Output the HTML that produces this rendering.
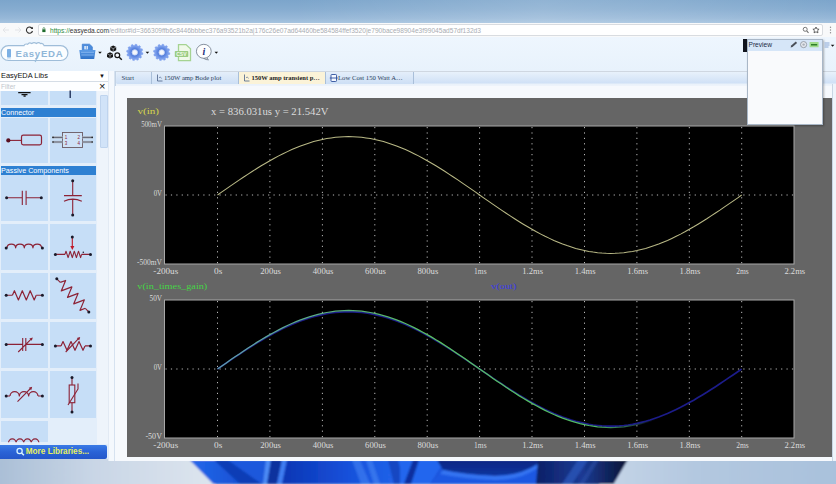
<!DOCTYPE html>
<html><head><meta charset="utf-8"><title>EasyEDA</title>
<style>
html,body{margin:0;padding:0}
body{width:836px;height:484px;overflow:hidden;position:relative;background:#c3d3e5;font-family:"Liberation Sans",sans-serif}
.abs{position:absolute}
#title{left:0;top:0;width:836px;height:22.5px;background:linear-gradient(90deg,rgba(255,255,255,0) 0%,rgba(255,255,255,0) 35%,rgba(255,255,255,0.16) 65%,rgba(255,255,255,0.1) 80%,rgba(255,255,255,0) 100%),linear-gradient(180deg,#7ca5cb 0%,#86acd0 40%,#97b8d8 80%,#a6c4df 100%)}
#addr{left:0;top:22.5px;width:836px;height:15px;background:#f8f9fa}
#url{left:37.5px;top:24.2px;width:785px;height:12.2px;background:#fff;border:1px solid #d9dce0;border-radius:2px;box-sizing:border-box}
#urltxt{left:50px;top:25.5px;font-size:6.6px;line-height:9px;white-space:nowrap;color:#a9adb3;letter-spacing:0px}
#toolbar{left:0;top:37px;width:836px;height:34px;background:linear-gradient(180deg,#eef6fe,#e8f2fc)}
#tabs{left:116px;top:71px;width:720px;height:15.5px;background:linear-gradient(180deg,#e8f1fb 0%,#d0e1f6 78%,#cddff5 80%,#e9f1fa 84%,#eef4fb 100%);border-top:1px solid #cfd7e1;border-bottom:1px solid #cdd6e0;box-sizing:border-box}
.tab{position:absolute;top:72px;height:11.7px;font-family:"Liberation Serif",serif;font-size:6.7px;line-height:12px;color:#2b3f5c;white-space:nowrap;border-right:1px solid #a9bfd9;box-sizing:border-box;background:linear-gradient(180deg,#e4eefa,#cddff5)}
#work{left:114px;top:86px;width:722px;height:374.5px;background:#f6f9fd}
#panel{left:127px;top:98px;width:705px;height:358.8px;background:#656565}
#left{left:0;top:71px;width:108px;height:388px;background:#e3eefa}
.cell{position:absolute;background:#c6def7}
.hdr{position:absolute;left:1px;width:95px;height:9px;background:#2e80d2;color:#fff;font-size:7.2px;line-height:9px;white-space:nowrap;overflow:hidden}
svg{position:absolute;left:0;top:0}
.g{stroke:#b8b8b8;stroke-width:1;stroke-dasharray:1.2 4.2}
.ax{font-family:"Liberation Serif","Noto Serif CJK SC",serif;font-size:8.6px;fill:#dcdcdc}
</style></head><body>
<!-- wallpaper -->
<svg width="836" height="484" viewBox="0 0 836 484">
<defs>
<linearGradient id="wl" x1="0" x2="1"><stop offset="0" stop-color="#a9bed6"/><stop offset="0.45" stop-color="#c9d6e6"/><stop offset="1" stop-color="#dde5ee"/></linearGradient>
<linearGradient id="wr" x1="0" x2="1"><stop offset="0" stop-color="#c6d5e7"/><stop offset="0.4" stop-color="#b3c8e0"/><stop offset="1" stop-color="#a9c1dc"/></linearGradient>
<linearGradient id="b1" x1="0" x2="1"><stop offset="0" stop-color="#2368ea"/><stop offset="1" stop-color="#1348cc"/></linearGradient>
<linearGradient id="b2" x1="0" x2="1"><stop offset="0" stop-color="#0c36b4"/><stop offset="0.55" stop-color="#1650da"/><stop offset="1" stop-color="#2264ea"/></linearGradient>
<linearGradient id="b3" x1="0" x2="0" y1="0" y2="1"><stop offset="0" stop-color="#0a2684"/><stop offset="1" stop-color="#10349e"/></linearGradient>
<linearGradient id="b4" x1="0" x2="1"><stop offset="0" stop-color="#0b1f66"/><stop offset="0.5" stop-color="#1b3a94"/><stop offset="1" stop-color="#081434"/></linearGradient>
</defs>
<filter id="wb" x="0" y="0" width="1" height="1"><feGaussianBlur stdDeviation="0.9"/></filter>
<g filter="url(#wb)">
<rect x="-5" y="450" width="220" height="40" fill="url(#wl)"/>
<rect x="600" y="450" width="241" height="40" fill="url(#wr)"/>
<path d="M190,460 H627.5 L613.5,484 H213.5 Z" fill="#1a55dc"/>
<path d="M190,460 H228 L262,484 H213.5 Z" fill="url(#b1)"/>
<path d="M214,460 H228 L262,484 H240 Z" fill="#0e3db6"/>
<path d="M228,460 H268 L264,484 H262 Z" fill="#1b58dc"/>
<path d="M266,460 h5 l-4,24 h-4z" fill="#4d8cf6"/>
<path d="M271,460 h11 l-5,24 h-10z" fill="#0d319e"/>
<path d="M282,460 h5 l-5,24 h-5z" fill="#3f7ef2"/>
<path d="M287,460 H400 V484 H282 Z" fill="url(#b2)"/>
<path d="M352,460 h8 l10,24 h-9z" fill="#3f7cf0" opacity="0.7"/>
<path d="M366,460 h6 l8,24 h-6z" fill="#4685f4" opacity="0.6"/>
<path d="M388,460 h10 l6,24 h-10z" fill="#0f3ab0" opacity="0.7"/>
<path d="M400,460 H445 L430,484 H400 Z" fill="#2466ee"/>
<path d="M413,460 h6 l-8,24 h-7z" fill="#0b2e9e"/>
<path d="M437,460 H540 L538,464 Q520,476 495,476 Q465,475 443,470 Z" fill="url(#b3)"/>
<path d="M443,470 Q465,475 495,476 Q520,476 538,464 L540,484 H430 Z" fill="#1c58e2"/>
<path d="M443,470 Q465,475 495,476 Q520,476 538,464 L538,468 Q520,480 495,480 Q465,479 440,474 Z" fill="#3574f2"/>
<path d="M538,460 H627.5 L613.5,484 H536 Z" fill="url(#b4)"/>
<path d="M578,460 h10 l-16,24 h-10z" fill="#2c56b8" opacity="0.8"/>
<path d="M594,460 h5 l-15,24 h-5z" fill="#2a4ea8" opacity="0.6"/>
</g>
</svg>

<div id="title" class="abs"></div>
<div id="addr" class="abs"></div>
<div id="url" class="abs"></div>
<div id="urltxt" class="abs"><span style="color:#2a8a3c">https://</span><span style="color:#333">easyeda.com</span>/editor#id=366309ffb6c8446bbbec376a93521b2a|176c26e07ad64460be584584ffef3520|e790bace98904e3f99045ad57df132d3</div>
<div id="toolbar" class="abs"></div>
<div id="tabs" class="abs"></div>
<div id="work" class="abs"></div>
<div id="panel" class="abs"></div>

<div class="tab" style="left:117px;width:35px;padding-left:4.5px">Start</div>
<div class="tab" style="left:152px;width:87px;padding-left:12px">150W amp Bode plot</div>
<div class="tab" style="left:239px;width:87px;padding-left:12.5px;background:#fbf3d8;font-weight:bold;font-size:6.5px;color:#222">150W amp transient p…</div>
<div class="tab" style="left:326px;width:88px;padding-left:12px">Low Cost 150 Watt A…</div>

<!-- left library panel -->
<div id="left" class="abs"></div>
<div class="abs" style="left:0;top:71px;width:108px;height:10px;background:#fff;font-size:7.4px;line-height:10px;color:#111;padding-left:1px;box-sizing:border-box">EasyEDA Libs</div>
<div class="abs" style="left:0;top:81px;width:108px;height:10px;background:#fdfeff;border-top:1px solid #d5dde6;font-size:6.5px;line-height:9px;color:#c2c6cc;padding-left:1px;box-sizing:border-box">Filter</div>
<div class="abs" style="left:99px;top:72px;font-size:6px;line-height:8px;color:#111">&#9660;</div>
<div class="abs" style="left:99px;top:81px;font-size:11px;line-height:11px;color:#111">&#215;</div>

<div class="cell" style="left:1px;top:91px;width:46.5px;height:13.5px"></div>
<div class="cell" style="left:49.5px;top:91px;width:46.5px;height:13.5px"></div>
<div class="hdr" style="top:108px">Connector</div>
<div class="cell" style="left:1px;top:117.5px;width:46.5px;height:45px"></div>
<div class="cell" style="left:49.5px;top:117.5px;width:46.5px;height:45px"></div>
<div class="hdr" style="top:166px">Passive Components</div>
<div class="cell" style="left:1px;top:175px;width:46.5px;height:46px"></div>
<div class="cell" style="left:49.5px;top:175px;width:46.5px;height:46px"></div>
<div class="cell" style="left:1px;top:223.5px;width:46.5px;height:46.5px"></div>
<div class="cell" style="left:49.5px;top:223.5px;width:46.5px;height:46.5px"></div>
<div class="cell" style="left:1px;top:272.5px;width:46.5px;height:46px"></div>
<div class="cell" style="left:49.5px;top:272.5px;width:46.5px;height:46px"></div>
<div class="cell" style="left:1px;top:321.5px;width:46.5px;height:46.5px"></div>
<div class="cell" style="left:49.5px;top:321.5px;width:46.5px;height:46.5px"></div>
<div class="cell" style="left:1px;top:370.5px;width:46.5px;height:47px"></div>
<div class="cell" style="left:49.5px;top:370.5px;width:46.5px;height:47px"></div>
<div class="cell" style="left:1px;top:420.5px;width:46.5px;height:21.5px"></div>
<!-- scrollbar -->
<div class="abs" style="left:97px;top:91px;width:11px;height:353px;background:#eef4fb"></div>
<div class="abs" style="left:100.3px;top:94.5px;width:7.5px;height:53px;background:#d1e3f8;border:1px solid #bfd4ee;box-sizing:border-box;border-radius:1px"></div>
<!-- splitter -->
<div class="abs" style="left:108px;top:71px;width:6.5px;height:389.5px;background:#f4f8fd;border-left:1px solid #e2eaf4;border-right:1px solid #d6e2f0;box-sizing:border-box"></div>
<!-- more libraries -->
<div class="abs" style="left:0;top:444.5px;width:107px;height:14.5px;background:linear-gradient(180deg,#3a7be6,#2a62d6 50%,#2457ca);border-radius:0 2px 2px 0;color:#e8f060;font-weight:bold;font-size:8.2px;line-height:13.5px;padding-left:25.8px;box-sizing:border-box;white-space:nowrap">More Libraries...</div>

<!-- preview -->
<div class="abs" style="left:747px;top:38.5px;width:76px;height:86px;background:#f9fafc;border:1px solid #a9b7c7;box-sizing:border-box;box-shadow:0.5px 0.5px 2px rgba(0,0,0,.3)"></div>
<div class="abs" style="left:748px;top:39.5px;width:74px;height:11px;background:#d6e6f8"></div>
<div class="abs" style="left:743px;top:39px;width:4px;height:12.5px;background:#10131c"></div>
<div class="abs" style="left:748.5px;top:40px;font-size:6.6px;line-height:9px;color:#1b2a44">Preview</div>
<!-- right edge -->
<div class="abs" style="left:832px;top:84px;width:4px;height:377px;background:#eef4fb;border-left:1px solid #c9d6e4;box-sizing:border-box"></div>

<svg width="836" height="484" viewBox="0 0 836 484">
<defs><radialGradient id="gg" cx="0.5" cy="0.5" r="0.5"><stop offset="0" stop-color="#4a72d4"/><stop offset="0.6" stop-color="#5882de"/><stop offset="1" stop-color="#7c9fec"/></radialGradient><linearGradient id="fg" x1="0" y1="0" x2="0" y2="1"><stop offset="0" stop-color="#5b9be6"/><stop offset="1" stop-color="#2f72c8"/></linearGradient></defs>
<g stroke="#e2e4e7" stroke-width="1" fill="none"><path d="M3,30 h6 M5.5,27.5 L3,30 L5.5,32.5"/><path d="M15,30 h6 M18.5,27.5 L21,30 L18.5,32.5"/></g>
<path d="M32.2,28.6 A3.1,3.1 0 1 0 32.5,31" stroke="#333" stroke-width="1.1" fill="none"/><path d="M30.8,28.9 h2.2 v-2.2 z" fill="#333"/>
<rect x="42.3" y="29.3" width="3.2" height="2.8" fill="#1d6b2c"/><path d="M43,29.3 v-0.8 a0.9,0.9 0 0 1 1.8,0 v0.8" stroke="#1d6b2c" stroke-width="0.6" fill="none"/>
<circle cx="805.2" cy="29.3" r="2" stroke="#6a6a6a" stroke-width="0.9" fill="none"/><path d="M806.7,30.9 l1.8,1.9" stroke="#6a6a6a" stroke-width="1.1"/>
<path d="M816,27 l0.95,2 2.15,0.25 -1.55,1.45 0.4,2.15 -1.95,-1.05 -1.95,1.05 0.4,-2.15 -1.55,-1.45 2.15,-0.25z" stroke="#444" stroke-width="0.8" fill="none"/>
<g fill="#8a8a8a"><circle cx="830.5" cy="27.3" r="0.7"/><circle cx="830.5" cy="30" r="0.7"/><circle cx="830.5" cy="32.7" r="0.7"/></g>
<path d="M8.5,45.6 H24 q1,-2.3 3.6,-1.3 q1.6,-2.3 4.2,-0.7 q2,-2 4.6,-0.2 q2.2,-1.6 4.3,0.2 q2.3,-0.8 3.4,2 H60.5 a7.45,7.45 0 0 1 0,14.9 H8.5 a7.45,7.45 0 0 1 0,-14.9z" fill="#fbfdff" stroke="#9fbdd9" stroke-width="1.2"/><path d="M37.3,56.5 L35.2,62" stroke="#9dc0de" stroke-width="1.3"/>
<rect x="7" y="49" width="4" height="8.5" rx="0.8" fill="#7db0e4"/><path d="M8,57.5 v2 M10,57.5 v2" stroke="#9dc0e6" stroke-width="0.7"/>
<text x="15.5" y="56.6" style="font-family:'Liberation Sans',sans-serif;font-weight:bold;font-size:9.6px;letter-spacing:0.75px" fill="#8fb6d8">EasyEDA</text>
<path d="M82.3,44.2 h7.2 l2.8,2.6 v4 h-10z" fill="#4c8cdc" stroke="#3f7fd2" stroke-width="0.8"/><path d="M84.3,46 h3.6 v3.4 h-3.6z" fill="#e4eefb"/><path d="M86.3,46 v3.4" stroke="#4c8cdc" stroke-width="0.7"/>
<path d="M79.3,50 h16.2 l-1.3,9 h-13.6z" fill="url(#fg)"/><path d="M81,52.3 h13 M81.3,55 h12.4" stroke="#8fbdf2" stroke-width="0.8"/>
<path d="M98.2,51.7 h3.6 l-1.8,2z" fill="#111"/>
<path d="M145.6,51.7 h3.6 l-1.8,2z" fill="#111"/>
<path d="M214.5,51.7 h3.6 l-1.8,2z" fill="#111"/>
<path d="M830.8000000000001,44.7 h3.6 l-1.8,2z" fill="#111"/>
<g fill="#151515"><path d="M113.2,45.6 l3,1.5 v3.2 l-3,1.5 -3,-1.5 v-3.2z"/><path d="M110,52.2 l3,1.5 v3.2 l-3,1.5 -3,-1.5 v-3.2z"/></g>
<g stroke="#e8eef6" stroke-width="0.5" fill="none"><path d="M110.2,47.1 l3,1.5 3,-1.5 M113.2,48.6 v3.2"/><path d="M107,53.7 l3,1.5 3,-1.5 M110,55.2 v3.2"/></g>
<circle cx="117.3" cy="55.2" r="2.4" stroke="#151515" stroke-width="1.2" fill="#f4f8fd"/><path d="M119.2,57.2 l2.6,2.5" stroke="#151515" stroke-width="1.5"/>
<path d="M141.80,52.40 L142.98,52.91 L142.72,54.52 L141.43,54.63 L140.86,55.90 L141.63,56.94 L140.60,58.20 L139.43,57.65 L138.30,58.46 L138.45,59.74 L136.92,60.32 L136.18,59.26 L134.80,59.40 L134.29,60.58 L132.68,60.32 L132.57,59.03 L131.30,58.46 L130.26,59.23 L129.00,58.20 L129.55,57.03 L128.74,55.90 L127.46,56.05 L126.88,54.52 L127.94,53.78 L127.80,52.40 L126.62,51.89 L126.88,50.28 L128.17,50.17 L128.74,48.90 L127.97,47.86 L129.00,46.60 L130.17,47.15 L131.30,46.34 L131.15,45.06 L132.68,44.48 L133.42,45.54 L134.80,45.40 L135.31,44.22 L136.92,44.48 L137.03,45.77 L138.30,46.34 L139.34,45.57 L140.60,46.60 L140.05,47.77 L140.86,48.90 L142.14,48.75 L142.72,50.28 L141.66,51.02Z" fill="#7c9fec" stroke="#7c9fec" stroke-width="0.5" stroke-linejoin="round"/>
<circle cx="134.8" cy="52.4" r="6.4" fill="url(#gg)"/>
<circle cx="134.8" cy="52.4" r="2.7" fill="#f4f7fc" stroke="#c4d4f6" stroke-width="0.9"/>
<path d="M168.70,52.40 L169.88,52.91 L169.62,54.52 L168.33,54.63 L167.76,55.90 L168.53,56.94 L167.50,58.20 L166.33,57.65 L165.20,58.46 L165.35,59.74 L163.82,60.32 L163.08,59.26 L161.70,59.40 L161.19,60.58 L159.58,60.32 L159.47,59.03 L158.20,58.46 L157.16,59.23 L155.90,58.20 L156.45,57.03 L155.64,55.90 L154.36,56.05 L153.78,54.52 L154.84,53.78 L154.70,52.40 L153.52,51.89 L153.78,50.28 L155.07,50.17 L155.64,48.90 L154.87,47.86 L155.90,46.60 L157.07,47.15 L158.20,46.34 L158.05,45.06 L159.58,44.48 L160.32,45.54 L161.70,45.40 L162.21,44.22 L163.82,44.48 L163.93,45.77 L165.20,46.34 L166.24,45.57 L167.50,46.60 L166.95,47.77 L167.76,48.90 L169.04,48.75 L169.62,50.28 L168.56,51.02Z" fill="#7c9fec" stroke="#7c9fec" stroke-width="0.5" stroke-linejoin="round"/>
<circle cx="161.7" cy="52.4" r="6.4" fill="url(#gg)"/>
<circle cx="161.7" cy="52.4" r="2.7" fill="#f4f7fc" stroke="#c4d4f6" stroke-width="0.9"/>
<path d="M178.5,44.6 h7.5 l4.5,4.2 v11.8 h-12z" fill="#f0f9ea" stroke="#a5d392" stroke-width="1.3"/>
<rect x="174.8" y="51" width="13.5" height="6" rx="0.8" fill="#9ccc84"/>
<text x="176.2" y="56" style="font-family:'Liberation Sans',sans-serif;font-weight:bold;font-size:5px" fill="#f2fbec">CSV</text>
<path d="M207,57.6 q0.3,1.5 1.5,2.2 q-3,0.2 -5,-1.6z" fill="#fdfeff" stroke="#6a7686" stroke-width="0.8"/><ellipse cx="203.8" cy="51.3" rx="7.4" ry="7.0" fill="#fdfeff" stroke="#6a7686" stroke-width="0.8"/>
<text x="202.6" y="55" style="font-family:'Liberation Serif',serif;font-weight:bold;font-style:italic;font-size:10px" fill="#1c2f7c">i</text>
<path d="M790.6,47.4 l0.6,-1.8 4.6,-4 1.3,1.3 -4.6,4z" fill="#4a4f58"/>
<circle cx="803.6" cy="44.6" r="3.1" fill="#e4e8ee" stroke="#8a929c" stroke-width="0.8"/><circle cx="803.6" cy="44.6" r="1.2" fill="#aab0b8"/>
<rect x="809.6" y="42" width="9" height="5.3" rx="0.6" fill="#9fdc8a"/><rect x="811" y="44" width="6.2" height="1.5" fill="#2e7d2a"/>
<path d="M824.5,43 h5 M824.5,45 h5 M824.5,47 h4" stroke="#7f9fd0" stroke-width="0.9"/>
<path d="M157.5,74.5 v6.5 h5" stroke="#4a5f86" stroke-width="0.8" fill="none"/><path d="M159.0,78 q1.2,-2.5 2.5,0.5" stroke="#4a5f86" stroke-width="0.6" fill="none"/>
<path d="M244.5,74.5 v6.5 h5" stroke="#4a5f86" stroke-width="0.8" fill="none"/><path d="M246.0,78 q1.2,-2.5 2.5,0.5" stroke="#4a5f86" stroke-width="0.6" fill="none"/>
<rect x="331" y="74.5" width="5.5" height="7" rx="0.8" fill="#f4f8ff" stroke="#2c4f9c" stroke-width="0.9"/><path d="M329.8,78 h8" stroke="#2c4f9c" stroke-width="0.9"/>
<circle cx="19.6" cy="451" r="2.6" stroke="#d8f4ff" stroke-width="1.3" fill="none"/><path d="M21.6,453 l2.3,2.3" stroke="#d8f4ff" stroke-width="1.5"/>
<path d="M18.2,92.6 h12.4 M21.5,94.6 h6 M23.5,96.2 h2.2" stroke="#111" stroke-width="1.2"/>
<path d="M70.2,90.5 v7.5" stroke="#16264e" stroke-width="1.3"/>
<path d="M8.3,140.4 H21.5" stroke="#8c2236" stroke-width="1.1"/><rect x="21.5" y="135.2" width="20" height="9.6" rx="1.8" fill="none" stroke="#8c2236" stroke-width="1.2"/><circle cx="8.3" cy="140.4" r="2.1" fill="#5a1020"/>
<rect x="62.5" y="132.5" width="20" height="15" fill="#cfe2f7" stroke="#6a5a62" stroke-width="0.9"/>
<path d="M52.5,137.4 h10 M52.5,142 h10 M82.5,137.4 h10 M82.5,142 h10" stroke="#b8c2cf" stroke-width="2.6"/>
<path d="M52.5,137.4 h10 M52.5,142 h10 M82.5,137.4 h10 M82.5,142 h10" stroke="#3a3a48" stroke-width="0.7"/>
<g fill="#222"><circle cx="53" cy="137.4" r="0.8"/><circle cx="53" cy="142" r="0.8"/><circle cx="92.2" cy="137.4" r="0.8"/><circle cx="92.2" cy="142" r="0.8"/></g>
<text x="64.8" y="139.3" style="font-family:'Liberation Sans',sans-serif;font-size:4.5px" fill="#8c2236">1</text><text x="64.8" y="144.6" style="font-family:'Liberation Sans',sans-serif;font-size:4.5px" fill="#8c2236">3</text><text x="77.6" y="139.3" style="font-family:'Liberation Sans',sans-serif;font-size:4.5px" fill="#8c2236">2</text><text x="77.6" y="144.6" style="font-family:'Liberation Sans',sans-serif;font-size:4.5px" fill="#8c2236">4</text>
<path d="M6.6,197.8 H22.3 M26.1,197.8 H41.3 M22.3,190.7 V205 M26.1,190.7 V205" stroke="#8c2236" stroke-width="1.1" fill="none" stroke-linejoin="round"/>
<g fill="#1a1a2a"><circle cx="6.6" cy="197.8" r="1.5"/><circle cx="41.3" cy="197.8" r="1.5"/></g>
<path d="M72.7,180.7 V195.6 M64,195.6 H81.8 M64,201.2 Q72.7,197 81.8,201.2 M72.7,199.2 V215" stroke="#8c2236" stroke-width="1.1" fill="none" stroke-linejoin="round"/>
<g fill="#1a1a2a"><circle cx="72.7" cy="180.7" r="1.5"/><circle cx="72.7" cy="215" r="1.5"/></g>
<path d="M7.0,247.8 a4.33,3.9 0 0 1 8.65,0 a4.33,3.9 0 0 1 8.65,0 a4.33,3.9 0 0 1 8.65,0 a4.33,3.9 0 0 1 8.65,0" stroke="#8c2236" stroke-width="1.2" fill="none" stroke-linejoin="round"/>
<g fill="#1a1a2a"><circle cx="6.2" cy="248" r="1.5"/><circle cx="42.4" cy="248" r="1.5"/></g>
<path d="M55.4,254.4 H65 M81.6,254.4 H90.5" stroke="#8c2236" stroke-width="1.1" fill="none" stroke-linejoin="round"/>
<path d="M65.0,254.4 L66.0,251.2 L68.1,257.6 L70.2,251.2 L72.3,257.6 L74.3,251.2 L76.4,257.6 L78.5,251.2 L80.6,257.6 L81.6,254.4" stroke="#8c2236" stroke-width="1.1" fill="none" stroke-linejoin="round"/>
<path d="M72.3,237 V247" stroke="#c01828" stroke-width="1.1"/><path d="M70.3,246 h4 l-2,4z" fill="#c01828"/>
<g fill="#1a1a2a"><circle cx="55.4" cy="254.4" r="1.5"/><circle cx="90.5" cy="254.4" r="1.5"/><circle cx="72.3" cy="237" r="1.5"/></g>
<circle cx="83.3" cy="252.2" r="0.8" fill="#1a1a2a"/>
<path d="M6.2,295.3 H12.4 M36.2,295.3 H42.4" stroke="#8c2236" stroke-width="1.1" fill="none" stroke-linejoin="round"/>
<path d="M12.4,295.3 L14.4,290.7 L18.4,299.9 L22.3,290.7 L26.3,299.9 L30.2,290.7 L34.2,299.9 L36.2,295.3" stroke="#8c2236" stroke-width="1.2" fill="none" stroke-linejoin="round"/>
<g fill="#1a1a2a"><circle cx="6.2" cy="295.3" r="1.5"/><circle cx="42.4" cy="295.3" r="1.5"/></g>
<g transform="translate(56.8,278.8) rotate(46.0)"><path d="M0,0 H5 M41.0,0 H46.0" stroke="#8c2236" stroke-width="1.1" fill="none" stroke-linejoin="round"/><path d="M5.0,0.0 L7.3,-5.2 L11.8,5.2 L16.3,-5.2 L20.8,5.2 L25.3,-5.2 L29.8,5.2 L34.3,-5.2 L38.8,5.2 L41.0,0.0" stroke="#8c2236" stroke-width="1.2" fill="none" stroke-linejoin="round"/></g>
<g fill="#1a1a2a"><circle cx="56.8" cy="278.8" r="1.5"/><circle cx="88.8" cy="311.9" r="1.5"/></g>
<path d="M6.2,344.4 H22.7 M25.8,344.4 H42.4 M22.7,338 V351 M25.8,338 V351 M18.2,352 L31.6,338.6" stroke="#8c2236" stroke-width="1.1" fill="none" stroke-linejoin="round"/>
<path d="M32.8,337.4 l-3.4,1 2.4,2.4z" fill="#8c2236"/>
<g fill="#1a1a2a"><circle cx="6.2" cy="344.4" r="1.5"/><circle cx="42.4" cy="344.4" r="1.5"/></g>
<path d="M55.4,345.9 H61 M85,345.9 H90.5" stroke="#8c2236" stroke-width="1.1" fill="none" stroke-linejoin="round"/>
<path d="M61.0,345.9 L63.0,341.5 L67.0,350.3 L71.0,341.5 L75.0,350.3 L79.0,341.5 L83.0,350.3 L85.0,345.9" stroke="#8c2236" stroke-width="1.2" fill="none" stroke-linejoin="round"/>
<path d="M65.7,352 L79,338.2" stroke="#8c2236" stroke-width="1.1" fill="none" stroke-linejoin="round"/>
<path d="M80.2,337 l-3.4,1 2.4,2.4z" fill="#8c2236"/>
<g fill="#1a1a2a"><circle cx="55.4" cy="345.9" r="1.5"/><circle cx="90.5" cy="345.9" r="1.5"/></g>
<path d="M6.2,396 H10 M38,396 H42.4" stroke="#8c2236" stroke-width="1.1" fill="none" stroke-linejoin="round"/>
<path d="M10.0,396.0 a4.67,4.60 0 0 1 9.33,0 a4.67,4.60 0 0 1 9.33,0 a4.67,4.60 0 0 1 9.33,0" stroke="#8c2236" stroke-width="1.2" fill="none" stroke-linejoin="round"/>
<path d="M17.5,401.7 L31,388" stroke="#8c2236" stroke-width="1.1" fill="none" stroke-linejoin="round"/>
<path d="M32.2,386.8 l-3.4,1 2.4,2.4z" fill="#8c2236"/>
<g fill="#1a1a2a"><circle cx="6.2" cy="396" r="1.5"/><circle cx="42.4" cy="396" r="1.5"/></g>
<path d="M72,377.5 V385 M72,402.7 V412 M68,405 L78,389 V383.5" stroke="#8c2236" stroke-width="1.1" fill="none" stroke-linejoin="round"/>
<rect x="69.2" y="385" width="5.6" height="17.7" fill="none" stroke="#8c2236" stroke-width="1.1"/>
<g fill="#1a1a2a"><circle cx="72" cy="377.5" r="1.5"/><circle cx="72" cy="412" r="1.5"/></g>
<svg x="0" y="420" width="48" height="22.3" viewBox="0 420 48 22.3" style="position:static"><path d="M8.5,443 a3.8,4.2 0 0 1 7.6,0 a3.8,4.2 0 0 1 7.6,0 a3.8,4.2 0 0 1 7.6,0 a3.8,4.2 0 0 1 7.6,0" stroke="#8c2236" stroke-width="1.2" fill="none"/></svg>
</svg>
<svg width="836" height="484" viewBox="0 0 836 484">
<defs><linearGradient id="gfade" gradientUnits="userSpaceOnUse" x1="217" y1="0" x2="742" y2="0"><stop offset="0" stop-color="#5fa0a8"/><stop offset="0.3" stop-color="#58b470"/><stop offset="0.45" stop-color="#5cc858"/><stop offset="0.72" stop-color="#4fb866"/><stop offset="0.79" stop-color="#3f8f70" stop-opacity="0.6"/><stop offset="0.84" stop-color="#1c1c8a" stop-opacity="0"/><stop offset="1" stop-color="#1c1c8a" stop-opacity="0"/></linearGradient></defs>
<rect x="164.5" y="126" width="629.5" height="138" fill="#000" stroke="#a8a8a8" stroke-width="1"/>
<line x1="217.5" y1="127" x2="217.5" y2="264" class="g"/>
<line x1="269.9" y1="127" x2="269.9" y2="264" class="g"/>
<line x1="322.4" y1="127" x2="322.4" y2="264" class="g"/>
<line x1="374.8" y1="127" x2="374.8" y2="264" class="g"/>
<line x1="427.2" y1="127" x2="427.2" y2="264" class="g"/>
<line x1="479.6" y1="127" x2="479.6" y2="264" class="g"/>
<line x1="532.0" y1="127" x2="532.0" y2="264" class="g"/>
<line x1="584.5" y1="127" x2="584.5" y2="264" class="g"/>
<line x1="636.9" y1="127" x2="636.9" y2="264" class="g"/>
<line x1="689.3" y1="127" x2="689.3" y2="264" class="g"/>
<line x1="741.7" y1="127" x2="741.7" y2="264" class="g"/>
<line x1="165.5" y1="195.0" x2="794.0" y2="195.0" class="g"/>
<path d="M217.5,195.0 L221.9,191.9 L226.3,188.9 L230.6,185.9 L235.0,182.9 L239.4,179.9 L243.7,177.0 L248.1,174.1 L252.5,171.2 L256.8,168.5 L261.2,165.8 L265.6,163.2 L269.9,160.7 L274.3,158.2 L278.7,155.9 L283.0,153.7 L287.4,151.6 L291.8,149.6 L296.1,147.8 L300.5,146.0 L304.9,144.4 L309.3,143.0 L313.6,141.6 L318.0,140.5 L322.4,139.5 L326.7,138.6 L331.1,137.9 L335.5,137.3 L339.8,136.9 L344.2,136.7 L348.6,136.6 L352.9,136.7 L357.3,136.9 L361.7,137.3 L366.0,137.9 L370.4,138.6 L374.8,139.5 L379.1,140.5 L383.5,141.6 L387.9,143.0 L392.3,144.4 L396.6,146.0 L401.0,147.8 L405.4,149.6 L409.7,151.6 L414.1,153.7 L418.5,155.9 L422.8,158.2 L427.2,160.7 L431.6,163.2 L435.9,165.8 L440.3,168.5 L444.7,171.2 L449.0,174.1 L453.4,177.0 L457.8,179.9 L462.1,182.9 L466.5,185.9 L470.9,188.9 L475.3,191.9 L479.6,195.0 L484.0,198.1 L488.4,201.1 L492.7,204.1 L497.1,207.1 L501.5,210.1 L505.8,213.0 L510.2,215.9 L514.6,218.8 L518.9,221.5 L523.3,224.2 L527.7,226.8 L532.0,229.3 L536.4,231.8 L540.8,234.1 L545.1,236.3 L549.5,238.4 L553.9,240.4 L558.2,242.2 L562.6,244.0 L567.0,245.6 L571.4,247.0 L575.7,248.4 L580.1,249.5 L584.5,250.5 L588.8,251.4 L593.2,252.1 L597.6,252.7 L601.9,253.1 L606.3,253.3 L610.7,253.4 L615.0,253.3 L619.4,253.1 L623.8,252.7 L628.1,252.1 L632.5,251.4 L636.9,250.5 L641.2,249.5 L645.6,248.4 L650.0,247.0 L654.4,245.6 L658.7,244.0 L663.1,242.2 L667.5,240.4 L671.8,238.4 L676.2,236.3 L680.6,234.1 L684.9,231.8 L689.3,229.3 L693.7,226.8 L698.0,224.2 L702.4,221.5 L706.8,218.8 L711.1,215.9 L715.5,213.0 L719.9,210.1 L724.2,207.1 L728.6,204.1 L733.0,201.1 L737.4,198.1 L741.7,195.0" fill="none" stroke="#b9b986" stroke-width="1.05" opacity="1"/>
<text x="162.0" y="126.5" text-anchor="end" class="ax" textLength="20.8" lengthAdjust="spacingAndGlyphs">500mV</text>
<text x="162.0" y="195.8" text-anchor="end" class="ax" textLength="8.3" lengthAdjust="spacingAndGlyphs">0V</text>
<text x="162.0" y="265" text-anchor="end" class="ax" textLength="24.9" lengthAdjust="spacingAndGlyphs">-500mV</text>
<text x="165.8" y="273.7" text-anchor="middle" class="ax" textLength="24.9" lengthAdjust="spacingAndGlyphs">-200us</text>
<text x="218.2" y="273.7" text-anchor="middle" class="ax" textLength="8.3" lengthAdjust="spacingAndGlyphs">0s</text>
<text x="270.6" y="273.7" text-anchor="middle" class="ax" textLength="20.8" lengthAdjust="spacingAndGlyphs">200us</text>
<text x="323.1" y="273.7" text-anchor="middle" class="ax" textLength="20.8" lengthAdjust="spacingAndGlyphs">400us</text>
<text x="375.5" y="273.7" text-anchor="middle" class="ax" textLength="20.8" lengthAdjust="spacingAndGlyphs">600us</text>
<text x="427.9" y="273.7" text-anchor="middle" class="ax" textLength="20.8" lengthAdjust="spacingAndGlyphs">800us</text>
<text x="480.3" y="273.7" text-anchor="middle" class="ax" textLength="12.5" lengthAdjust="spacingAndGlyphs">1ms</text>
<text x="532.7" y="273.7" text-anchor="middle" class="ax" textLength="20.8" lengthAdjust="spacingAndGlyphs">1.2ms</text>
<text x="585.2" y="273.7" text-anchor="middle" class="ax" textLength="20.8" lengthAdjust="spacingAndGlyphs">1.4ms</text>
<text x="637.6" y="273.7" text-anchor="middle" class="ax" textLength="20.8" lengthAdjust="spacingAndGlyphs">1.6ms</text>
<text x="690.0" y="273.7" text-anchor="middle" class="ax" textLength="20.8" lengthAdjust="spacingAndGlyphs">1.8ms</text>
<text x="742.4" y="273.7" text-anchor="middle" class="ax" textLength="12.5" lengthAdjust="spacingAndGlyphs">2ms</text>
<text x="794.8" y="273.7" text-anchor="middle" class="ax" textLength="20.8" lengthAdjust="spacingAndGlyphs">2.2ms</text>
<rect x="164.5" y="300" width="629.5" height="138" fill="#000" stroke="#a8a8a8" stroke-width="1"/>
<line x1="217.5" y1="301" x2="217.5" y2="438" class="g"/>
<line x1="269.9" y1="301" x2="269.9" y2="438" class="g"/>
<line x1="322.4" y1="301" x2="322.4" y2="438" class="g"/>
<line x1="374.8" y1="301" x2="374.8" y2="438" class="g"/>
<line x1="427.2" y1="301" x2="427.2" y2="438" class="g"/>
<line x1="479.6" y1="301" x2="479.6" y2="438" class="g"/>
<line x1="532.0" y1="301" x2="532.0" y2="438" class="g"/>
<line x1="584.5" y1="301" x2="584.5" y2="438" class="g"/>
<line x1="636.9" y1="301" x2="636.9" y2="438" class="g"/>
<line x1="689.3" y1="301" x2="689.3" y2="438" class="g"/>
<line x1="741.7" y1="301" x2="741.7" y2="438" class="g"/>
<line x1="165.5" y1="369.0" x2="794.0" y2="369.0" class="g"/>
<path d="M217.5,369.0 L221.9,366.0 L226.3,363.0 L230.6,360.1 L235.0,357.1 L239.4,354.2 L243.7,351.3 L248.1,348.5 L252.5,345.7 L256.8,343.0 L261.2,340.4 L265.6,337.8 L269.9,335.4 L274.3,333.0 L278.7,330.7 L283.0,328.6 L287.4,326.5 L291.8,324.5 L296.1,322.7 L300.5,321.0 L304.9,319.5 L309.3,318.0 L313.6,316.7 L318.0,315.6 L322.4,314.6 L326.7,313.7 L331.1,313.0 L335.5,312.5 L339.8,312.1 L344.2,311.9 L348.6,311.8 L352.9,311.9 L357.3,312.1 L361.7,312.5 L366.0,313.0 L370.4,313.7 L374.8,314.6 L379.1,315.6 L383.5,316.7 L387.9,318.0 L392.3,319.5 L396.6,321.0 L401.0,322.7 L405.4,324.5 L409.7,326.5 L414.1,328.6 L418.5,330.7 L422.8,333.0 L427.2,335.4 L431.6,337.8 L435.9,340.4 L440.3,343.0 L444.7,345.7 L449.0,348.5 L453.4,351.3 L457.8,354.2 L462.1,357.1 L466.5,360.1 L470.9,363.0 L475.3,366.0 L479.6,369.0 L484.0,372.0 L488.4,375.0 L492.7,377.9 L497.1,380.9 L501.5,383.8 L505.8,386.7 L510.2,389.5 L514.6,392.3 L518.9,395.0 L523.3,397.6 L527.7,400.2 L532.0,402.6 L536.4,405.0 L540.8,407.3 L545.1,409.4 L549.5,411.5 L553.9,413.5 L558.2,415.3 L562.6,417.0 L567.0,418.5 L571.4,420.0 L575.7,421.3 L580.1,422.4 L584.5,423.4 L588.8,424.3 L593.2,425.0 L597.6,425.5 L601.9,425.9 L606.3,426.1 L610.7,426.2 L615.0,426.1 L619.4,425.9 L623.8,425.5 L628.1,425.0 L632.5,424.3 L636.9,423.4 L641.2,422.4 L645.6,421.3 L650.0,420.0 L654.4,418.5 L658.7,417.0 L663.1,415.3 L667.5,413.5 L671.8,411.5 L676.2,409.4 L680.6,407.3 L684.9,405.0 L689.3,402.6 L693.7,400.2 L698.0,397.6 L702.4,395.0 L706.8,392.3 L711.1,389.5 L715.5,386.7 L719.9,383.8 L724.2,380.9 L728.6,377.9 L733.0,375.0 L737.4,372.0 L741.7,369.0" fill="none" stroke="#1c1c8a" stroke-width="1.7" opacity="1"/>
<path d="M217.5,369.0 L221.9,365.9 L226.3,362.9 L230.6,359.8 L235.0,356.8 L239.4,353.9 L243.7,350.9 L248.1,348.0 L252.5,345.2 L256.8,342.4 L261.2,339.8 L265.6,337.1 L269.9,334.6 L274.3,332.2 L278.7,329.9 L283.0,327.6 L287.4,325.5 L291.8,323.5 L296.1,321.7 L300.5,319.9 L304.9,318.3 L309.3,316.9 L313.6,315.6 L318.0,314.4 L322.4,313.4 L326.7,312.5 L331.1,311.8 L335.5,311.2 L339.8,310.8 L344.2,310.6 L348.6,310.5 L352.9,310.6 L357.3,310.8 L361.7,311.2 L366.0,311.8 L370.4,312.5 L374.8,313.4 L379.1,314.4 L383.5,315.6 L387.9,316.9 L392.3,318.3 L396.6,319.9 L401.0,321.7 L405.4,323.5 L409.7,325.5 L414.1,327.6 L418.5,329.9 L422.8,332.2 L427.2,334.6 L431.6,337.1 L435.9,339.8 L440.3,342.4 L444.7,345.2 L449.0,348.0 L453.4,350.9 L457.8,353.9 L462.1,356.8 L466.5,359.8 L470.9,362.9 L475.3,365.9 L479.6,369.0 L484.0,372.1 L488.4,375.1 L492.7,378.2 L497.1,381.2 L501.5,384.1 L505.8,387.1 L510.2,390.0 L514.6,392.8 L518.9,395.6 L523.3,398.2 L527.7,400.9 L532.0,403.4 L536.4,405.8 L540.8,408.1 L545.1,410.4 L549.5,412.5 L553.9,414.5 L558.2,416.3 L562.6,418.1 L567.0,419.7 L571.4,421.1 L575.7,422.4 L580.1,423.6 L584.5,424.6 L588.8,425.5 L593.2,426.2 L597.6,426.8 L601.9,427.2 L606.3,427.4 L610.7,427.5 L615.0,427.4 L619.4,427.2 L623.8,426.8 L628.1,426.2 L632.5,425.5 L636.9,424.6 L641.2,423.6 L645.6,422.4 L650.0,421.1 L654.4,419.7 L658.7,418.1 L663.1,416.3 L667.5,414.5 L671.8,412.5 L676.2,410.4 L680.6,408.1 L684.9,405.8 L689.3,403.4 L693.7,400.9 L698.0,398.2 L702.4,395.6 L706.8,392.8 L711.1,390.0 L715.5,387.1 L719.9,384.1 L724.2,381.2 L728.6,378.2 L733.0,375.1 L737.4,372.1 L741.7,369.0" fill="none" stroke="url(#gfade)" stroke-width="1.25" opacity="1"/>
<text x="162.0" y="300.5" text-anchor="end" class="ax" textLength="12.5" lengthAdjust="spacingAndGlyphs">50V</text>
<text x="162.0" y="369.8" text-anchor="end" class="ax" textLength="8.3" lengthAdjust="spacingAndGlyphs">0V</text>
<text x="162.0" y="439" text-anchor="end" class="ax" textLength="16.6" lengthAdjust="spacingAndGlyphs">-50V</text>
<text x="165.8" y="447.7" text-anchor="middle" class="ax" textLength="24.9" lengthAdjust="spacingAndGlyphs">-200us</text>
<text x="218.2" y="447.7" text-anchor="middle" class="ax" textLength="8.3" lengthAdjust="spacingAndGlyphs">0s</text>
<text x="270.6" y="447.7" text-anchor="middle" class="ax" textLength="20.8" lengthAdjust="spacingAndGlyphs">200us</text>
<text x="323.1" y="447.7" text-anchor="middle" class="ax" textLength="20.8" lengthAdjust="spacingAndGlyphs">400us</text>
<text x="375.5" y="447.7" text-anchor="middle" class="ax" textLength="20.8" lengthAdjust="spacingAndGlyphs">600us</text>
<text x="427.9" y="447.7" text-anchor="middle" class="ax" textLength="20.8" lengthAdjust="spacingAndGlyphs">800us</text>
<text x="480.3" y="447.7" text-anchor="middle" class="ax" textLength="12.5" lengthAdjust="spacingAndGlyphs">1ms</text>
<text x="532.7" y="447.7" text-anchor="middle" class="ax" textLength="20.8" lengthAdjust="spacingAndGlyphs">1.2ms</text>
<text x="585.2" y="447.7" text-anchor="middle" class="ax" textLength="20.8" lengthAdjust="spacingAndGlyphs">1.4ms</text>
<text x="637.6" y="447.7" text-anchor="middle" class="ax" textLength="20.8" lengthAdjust="spacingAndGlyphs">1.6ms</text>
<text x="690.0" y="447.7" text-anchor="middle" class="ax" textLength="20.8" lengthAdjust="spacingAndGlyphs">1.8ms</text>
<text x="742.4" y="447.7" text-anchor="middle" class="ax" textLength="12.5" lengthAdjust="spacingAndGlyphs">2ms</text>
<text x="794.8" y="447.7" text-anchor="middle" class="ax" textLength="20.8" lengthAdjust="spacingAndGlyphs">2.2ms</text>
<text x="137.5" y="114" class="ax" style="fill:#d6d64c;font-size:9.2px" textLength="21.5" lengthAdjust="spacingAndGlyphs">v(in)</text>
<text x="211" y="114.6" class="ax" style="font-size:9.4px" textLength="117.5" lengthAdjust="spacingAndGlyphs">x = 836.031us y = 21.542V</text>
<text x="137.3" y="288.6" class="ax" style="fill:#45d445;font-size:9px" textLength="70" lengthAdjust="spacingAndGlyphs">v(in_times_gain)</text>
<text x="491" y="288.6" class="ax" style="fill:#3a3ae8;font-size:9px" textLength="25.5" lengthAdjust="spacingAndGlyphs">v(out)</text>
</svg>
</body></html>
